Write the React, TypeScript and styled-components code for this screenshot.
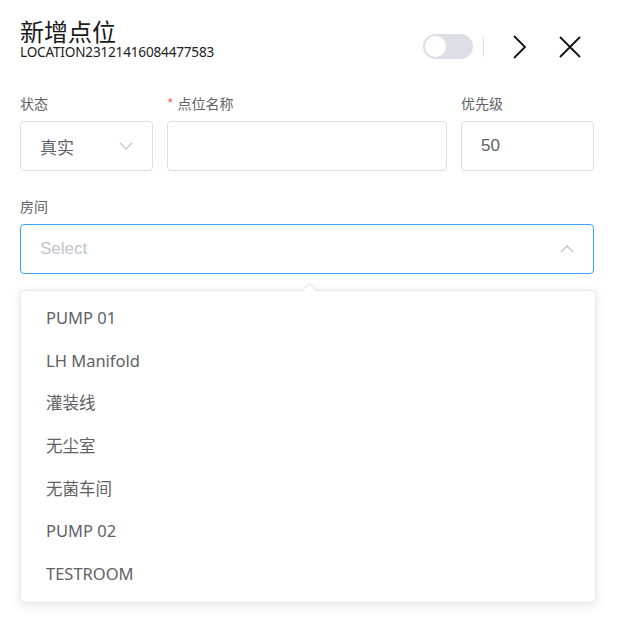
import React from "react";
import styled, { createGlobalStyle } from "styled-components";

const Global = createGlobalStyle`
  html, body { margin: 0; padding: 0; background: #fff; }
  body { font-family: "Noto Sans", "Noto Sans CJK SC", sans-serif; }
  * { box-sizing: border-box; }
`;

const Page = styled.div`
  width: 619px;
  height: 621px;
  padding: 16px 25px 0 20px;
  display: flex;
  flex-direction: column;
`;

const Header = styled.div`
  display: flex;
  align-items: flex-start;
  justify-content: space-between;
  height: 77px;
  padding-right: 12px;
`;

const TitleBlock = styled.div`
  display: flex;
  flex-direction: column;
`;

const Title = styled.div`
  font-family: "Noto Sans CJK SC", sans-serif;
  font-size: 24px;
  line-height: 29px;
  color: #1a1a1a;
  font-weight: 400;
`;

const Code = styled.div`
  font-family: "Noto Sans", sans-serif;
  font-size: 13.6px;
  line-height: 14px;
  color: #222;
  letter-spacing: -0.2px;
`;

const Actions = styled.div`
  display: flex;
  align-items: center;
  margin-top: 18px;
`;

const Toggle = styled.div`
  width: 50px;
  height: 25px;
  border-radius: 13px;
  background: #dcdfe6;
  position: relative;
  &::after {
    content: "";
    position: absolute;
    left: 2px;
    top: 2px;
    width: 21px;
    height: 21px;
    border-radius: 50%;
    background: #fff;
  }
`;

const Divider = styled.div`
  width: 1px;
  height: 20px;
  background: #dcdfe6;
  margin: 0 0 0 10px;
`;

const IconButton = styled.div<{ $ml: number }>`
  margin-left: ${(p) => p.$ml}px;
  display: flex;
  width: 24px;
  height: 24px;
  align-items: center;
  justify-content: center;
`;

const Row = styled.div`
  display: grid;
  grid-template-columns: 133px 280px 133px;
  column-gap: 14px;
`;

const Field = styled.div`
  display: flex;
  flex-direction: column;
`;

const Label = styled.div`
  font-family: "Noto Sans CJK SC", sans-serif;
  font-size: 14px;
  line-height: 20px;
  color: #606266;
  height: 28px;
`;

const Star = styled.span`
  color: #f56c6c;
  margin-right: 4px;
`;

const Box = styled.div<{ $focus?: boolean }>`
  height: 50px;
  border: 1px solid ${(p) => (p.$focus ? "#409eff" : "#dcdfe6")};
  border-radius: 4px;
  display: flex;
  align-items: center;
  padding: 0 19px;
  justify-content: space-between;
  position: relative;
`;

const BoxText = styled.span<{ $placeholder?: boolean; $cjk?: boolean }>`
  font-family: ${(p) => (p.$cjk ? '"Noto Sans CJK SC", sans-serif' : '"Liberation Sans", Arial, sans-serif')};
  font-size: 17px;
  color: ${(p) => (p.$placeholder ? "#c0c4cc" : "#606266")};
`;

const RoomSection = styled.div`
  margin-top: 25px;
  display: flex;
  flex-direction: column;
  width: 574px;
  position: relative;
`;

const Dropdown = styled.div`
  margin-top: 16px;
  width: 576px;
  border: 1px solid #e4e7ed;
  border-radius: 4px;
  background: #fff;
  box-shadow: 0 2px 12px 0 rgba(0, 0, 0, 0.1);
  padding: 6px 0;
  position: relative;
  &::before {
    content: "";
    position: absolute;
    top: -6px;
    left: 283px;
    width: 10px;
    height: 10px;
    background: #fff;
    border-left: 1px solid #e4e7ed;
    border-top: 1px solid #e4e7ed;
    transform: rotate(45deg);
  }
`;

const Item = styled.div`
  height: 42.7px;
  line-height: 42.7px;
  padding-left: 25px;
  font-size: 16.5px;
  color: #606266;
  font-family: "Noto Sans", "Noto Sans CJK SC", sans-serif;
`;

const items = ["PUMP 01", "LH Manifold", "灌装线", "无尘室", "无菌车间", "PUMP 02", "TESTROOM"];

export default function App() {
  return (
    <Page>
      <Global />
      <Header>
        <TitleBlock>
          <Title>新增点位</Title>
          <Code>LOCATION23121416084477583</Code>
        </TitleBlock>
        <Actions>
          <Toggle />
          <Divider />
          <IconButton $ml={24}>
            <svg width="24" height="24" viewBox="0 0 24 24" fill="none" stroke="#111" strokeWidth="1.8">
              <path d="M6 1 L17 12 L6 23" />
            </svg>
          </IconButton>
          <IconButton $ml={26}>
            <svg width="24" height="24" viewBox="0 0 24 24" fill="none" stroke="#111" strokeWidth="1.8">
              <path d="M2 2 L22 22 M22 2 L2 22" />
            </svg>
          </IconButton>
        </Actions>
      </Header>
      <Row>
        <Field>
          <Label>状态</Label>
          <Box>
            <BoxText $cjk>真实</BoxText>
            <svg width="14" height="8" viewBox="0 0 14 8" fill="none" stroke="#c0c4cc" strokeWidth="1.2">
              <path d="M1 1 L7 7 L13 1" />
            </svg>
          </Box>
        </Field>
        <Field>
          <Label>
            <Star>*</Star>点位名称
          </Label>
          <Box />
        </Field>
        <Field>
          <Label>优先级</Label>
          <Box>
            <BoxText>50</BoxText>
          </Box>
        </Field>
      </Row>
      <RoomSection>
        <Label>房间</Label>
        <Box $focus>
          <BoxText $placeholder>Select</BoxText>
          <svg width="14" height="8" viewBox="0 0 14 8" fill="none" stroke="#c0c4cc" strokeWidth="1.4">
            <path d="M1 7 L7 1 L13 7" />
          </svg>
        </Box>
        <Dropdown>
          {items.map((t) => (
            <Item key={t}>{t}</Item>
          ))}
        </Dropdown>
      </RoomSection>
    </Page>
  );
}
